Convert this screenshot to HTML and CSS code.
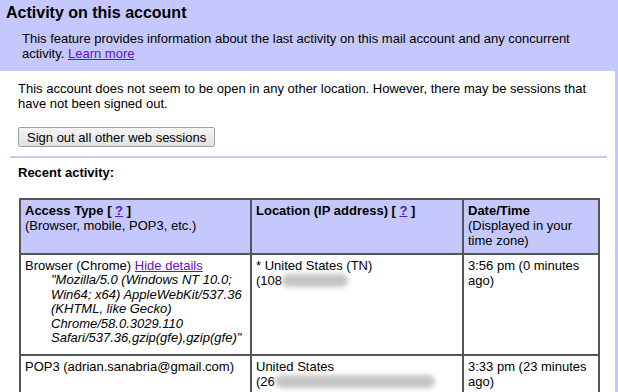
FILE: index.html
```html
<!DOCTYPE html>
<html lang="en">
<head>
    <meta charset="UTF-8">
    <title>Activity on this account</title>
    <link rel="stylesheet" href="styles.css">
</head>
<body>
    <div class="header">
        <h1>Activity on this account</h1>
        <div class="intro">
            This feature provides information about the last activity on this mail account and any concurrent activity. <a href="#">Learn more</a>
        </div>
    </div>

    <div class="panel">
        <div class="section">
            <p class="status">This account does not seem to be open in any other location. However, there may be sessions that have not been signed out.</p>
            <button type="button">Sign out all other web sessions</button>
        </div>

        <div class="sep"></div>

        <div class="section">
            <div class="recent">Recent activity:</div>

            <table class="activity">
                <colgroup>
                    <col class="c-type">
                    <col class="c-loc">
                    <col class="c-date">
                </colgroup>
                <tr>
                    <th><b>Access Type [ <a href="#">?</a> ]</b><br>(Browser, mobile, POP3, etc.)</th>
                    <th><b>Location (IP address) [ <a href="#">?</a> ]</b></th>
                    <th><b>Date/Time</b><br>(Displayed in your time zone)</th>
                </tr>
                <tr>
                    <td>
                        Browser (Chrome) <a href="#">Hide details</a>
                        <div class="agent">"Mozilla/5.0 (Windows NT 10.0; Win64; x64) AppleWebKit/537.36 (KHTML, like Gecko) Chrome/58.0.3029.110 Safari/537.36,gzip(gfe),gzip(gfe)"</div>
                    </td>
                    <td>* United States (TN)<br>(108<span class="blur" style="width:66px"></span></td>
                    <td>3:56 pm (0 minutes ago)</td>
                </tr>
                <tr>
                    <td>POP3 (adrian.sanabria@gmail.com)</td>
                    <td>United States<br>(26<span class="blur" style="width:160px"></span></td>
                    <td>3:33 pm (23 minutes ago)</td>
                </tr>
            </table>
        </div>
    </div>
</body>
</html>
```

FILE: styles.css
```css
body {
    margin: 0;
    font-family: "Liberation Sans", Arial, sans-serif;
    font-size: 13px;
    color: #000;
    background: #fff;
}
a {
    color: #6611cc;
}
.header {
    background-color: #c4c8fc;
    padding: 3px 6px 10px 6px;
}
.header h1 {
    margin: 0 0 8px 0;
    font-size: 16px;
    line-height: 20px;
}
.intro {
    margin-left: 16px;
    margin-right: 20px;
}
.panel {
    border-right: 3px solid #c4c8fc;
    padding: 10px 8px 0 10px;
}
.section {
    padding-left: 8px;
}
.status {
    margin: 0 0 16px 0;
    padding-right: 20px;
}
button {
    font-family: "Liberation Sans", Arial, sans-serif;
    font-size: 13px;
    height: 20px;
    padding: 0 8px;
    color: #000;
    background: linear-gradient(#f4f4f4, #e2e2e2);
    border: 1px solid #a0a0a0;
    border-radius: 2px;
}
.sep {
    height: 2px;
    background-color: #c4c8fc;
    margin: 9px 0 7px 0;
}
.recent {
    font-weight: bold;
    margin-bottom: 18px;
}
.activity {
    border-collapse: collapse;
    table-layout: fixed;
    width: 581px;
    margin-left: 1px;
}
.c-type {
    width: 231px;
}
.c-loc {
    width: 212px;
}
.activity th,
.activity td {
    border: 2px solid #555;
    padding: 3px 4px 5px 4px;
    text-align: left;
    vertical-align: top;
    font-weight: normal;
}
.activity th {
    background-color: #c4c8fc;
}
.agent {
    font-style: italic;
    margin-left: 26px;
    margin-bottom: 3px;
    line-height: 14.5px;
}
.blur {
    display: inline-block;
    height: 13px;
    vertical-align: -2px;
    background: #c4c4c4;
    border-radius: 7px;
    filter: blur(2.5px);
}
```
